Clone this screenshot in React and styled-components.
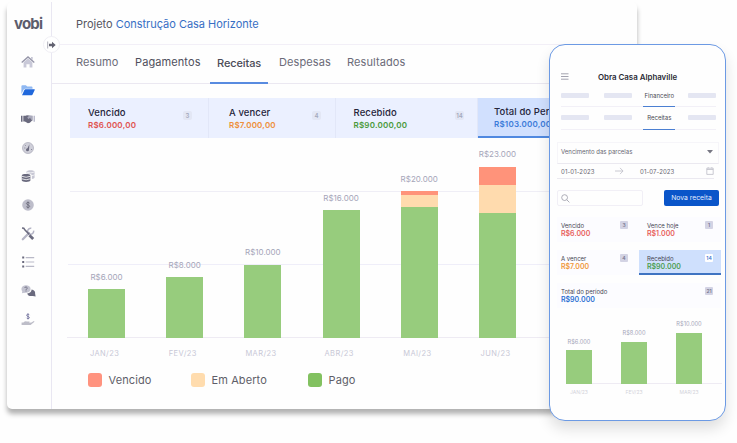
import React from "react";
import styled, { createGlobalStyle } from "styled-components";

const summary = [
  { label: "Vencido", value: "R$6.000,00", count: 3, color: "#e0524f", width: 139 },
  { label: "A vencer", value: "R$7.000,00", count: 4, color: "#ee8f3a", width: 127 },
  { label: "Recebido", value: "R$90.000,00", count: 14, color: "#4a9a3c", width: 142 },
  { label: "Total do Período", value: "R$103.000,00", color: "#3c7bd9", width: 140, active: true },
];

const tabs = [
  { name: "Resumo", width: 41, color: "#6b6b78" },
  { name: "Pagamentos", width: 64, color: "#4f4f5c" },
  { name: "Receitas", width: 44, active: true },
  { name: "Despesas", width: 50, color: "#6b6b78" },
  { name: "Resultados", width: 57, color: "#6b6b78" },
];

const months = [
  { month: "JAN/23", total: "R$6.000", paid: 49 },
  { month: "FEV/23", total: "R$8.000", paid: 61 },
  { month: "MAR/23", total: "R$10.000", paid: 73.5 },
  { month: "ABR/23", total: "R$16.000", paid: 128 },
  { month: "MAI/23", total: "R$20.000", paid: 131.5, open: 11.5, late: 3.7 },
  { month: "JUN/23", total: "R$23.000", paid: 124.7, open: 28, late: 18.8 },
];

const legend = [
  { name: "Vencido", color: "#ff937f", width: 103 },
  { name: "Em Aberto", color: "#ffdcae", width: 117 },
  { name: "Pago", color: "#82c160", width: 60 },
];

const mobileCards = [
  { label: "Vencido", value: "R$6.000", count: 3, color: "#e8605c" },
  { label: "Vence hoje", value: "R$1.000", count: 1, color: "#e8605c" },
  { label: "A vencer", value: "R$7.000", count: 4, color: "#f0983c" },
  { label: "Recebido", value: "R$90.000", count: 14, color: "#4c9e52", active: true },
  { label: "Total do período", value: "R$90.000", count: 21, color: "#2d70d2", wide: true },
];

const mobileMonths = [
  { month: "JAN/23", total: "R$6.000", paid: 34 },
  { month: "FEV/23", total: "R$8.000", paid: 42.5 },
  { month: "MAR/23", total: "R$10.000", paid: 51.5 },
];

const dark = "#6a6a7e";
const light = "#bcbccd";

const icons = [
  <>
    <path d="M2.6 7.2 7 3.4l4.4 3.8v5.4H8.6V9.2H5.4v3.4H2.6z" fill="#c9c9d8" />
    <path d="M.7 7.4 7 1.9l6.3 5.5" fill="none" stroke="#9595a8" strokeWidth="1.3" />
    <path d="M10 2h1.7v3L10 3.6z" fill="#c5c5d4" />
  </>,
  <>
    <path d="M.4 11V3.2q0-1 1-1h3.4l1.5 1.4h4.2q1 0 1 1v1.2H4.2q-1 0-1.5.8z" fill="#8fb8f2" />
    <path d="M1 12.2 3.4 7q.3-.7 1-.7h9q.6 0 .3.7l-2.1 4.5q-.3.7-1 .7z" fill="#2068dc" />
  </>,
  <>
    <path d="M0 3.8h1.5v6H0z" fill={dark} />
    <path d="M12.5 3.8H14v6h-1.5z" fill={light} />
    <path d="M2.3 3.8h2.2L6 3.3l2.4.3 2.9 4.6-2.4 2.6-2 .5-3-1.9H2.3z" fill={dark} />
    <path d="M6.3 5.5 8.6 3.2l3.2.6v5.3L9 6.1 7.3 7z" fill="#a9a9bb" />
  </>,
  <>
    <circle cx="7" cy="7" r="5.5" fill="#cfcfd9" stroke="#a9a9b8" strokeWidth=".7" />
    <path d="M8.4 3.3 8 8.8a1.5 1.5 0 1 1-1.5-1.5z" fill={dark} />
    <path d="M3.3 7h1M4.3 4.3l.7.7M10 8.5h1" stroke={dark} strokeWidth=".7" />
  </>,
  <>
    <path d="M5.5 2.7C5.5.7 13.6.7 13.6 2.7v5.8c0 .8-1.1 1.2-2.7 1.5V5.9c-1-.9-3-1.3-5.4-1.3z" fill="#c7c7d4" />
    <path d="M6 3.3q3.8 1.3 7.5-.3M11 6.6q1.5-.2 2.6-.8" fill="none" stroke="#fff" strokeWidth=".7" />
    <path d="M.8 6.5c0-1.9 8.6-1.9 8.6 0v5c0 1.9-8.6 1.9-8.6 0z" fill={dark} />
    <path d="M.8 7.3q4.3 1.9 8.6 0M.8 9.8q4.3 1.9 8.6 0" fill="none" stroke="#fff" strokeWidth=".8" />
  </>,
  <>
    <circle cx="7" cy="7" r="5.8" fill="#bdbdca" />
    <path d="M8.7 5.3C8.3 4.2 5.4 4.1 5.4 5.5s3.3 1.3 3.3 2.8-2.9 1.5-3.4.3M7 3.5v7" fill="none" stroke="#6c6c7c" strokeWidth=".9" />
  </>,
  <>
    <path d="M1.8 12.2 8 6" stroke="#b4b4c5" strokeWidth="2.3" strokeLinecap="round" />
    <path d="M12.6 3.6a3 3 0 1 1-2.3-2.3" fill="none" stroke="#b4b4c5" strokeWidth="1.5" />
    <path d="m1 1.1 1.8.2 1.2 1.8 4.3 4.3" fill="none" stroke={dark} strokeWidth="1.5" />
    <path d="m8.4 8.3 3.8 3.8" stroke={dark} strokeWidth="2.8" />
  </>,
  <>
    <path d="M1.2 1.6h2v2h-2zM1.2 6h2v2h-2zM1.2 10.4h2v2h-2z" fill={dark} />
    <path d="M4.7 2.6h8.5M4.7 7h8.5M4.7 11.4h8.5" stroke="#b9b9c7" strokeWidth="1.2" />
  </>,
  <>
    <path d="M10.6 5.5c2.4.4 3.9 2 3.5 4l.5 3-2.8-.6c-3 .7-5.2-.5-5.6-2.5 2.8-.2 4.3-1.7 4.4-3.9z" fill={dark} />
    <ellipse cx="5" cy="5" rx="4.6" ry="3.8" fill="#c3c3d0" />
    <path d="M.9 9.2 1.7 6l2.8 2.4z" fill="#c3c3d0" />
    <path d="M3.6 4c.2-1.5 3-1.2 2.6.3-.3.8-1.2.6-1.2 1.6M5 6.5v1" fill="none" stroke={dark} strokeWidth=".9" />
  </>,
  <>
    <path d="M8.4 2.1C7.9.9 5.6.9 5.6 2.3s2.8 1 2.8 2.3-2.4 1.4-2.9.2M7 .3v6.1" fill="none" stroke="#7777a0" strokeWidth=".9" />
    <path d="M.6 9.4h1.8q1.8-1.6 3.5-.9h2.4q.8.6-.1 1.2 2.1.1 4.2-1.5 1.4-.4.8.8L9.6 12H.6z" fill="#bdbdc8" />
  </>,
];

const BarChart = ({ data, small }) => (
  <>
    <Plot $small={small}>
      {data.map((item) => (
        <Column key={item.month} $small={small}>
          <BarValue $small={small}>{item.total}</BarValue>
          {item.late && <Bar $color="#ff937a" style={{ height: item.late }} />}
          {item.open && <Bar $color="#ffdbae" style={{ height: item.open }} />}
          <Bar $color="#97cc7d" style={{ height: item.paid }} />
        </Column>
      ))}
    </Plot>
    <Axis $small={small}>
      {data.map((item) => (
        <Month key={item.month} $small={small}>
          {item.month}
        </Month>
      ))}
    </Axis>
  </>
);

const Sidebar = () => (
  <StyledSidebar>
    <Logo>vobi</Logo>
    <IconList>
      {icons.map((icon, i) => (
        <svg key={i} width="14" height="14" viewBox="0 0 14 14">
          {icon}
        </svg>
      ))}
    </IconList>
    <Toggle>
      <svg width="9" height="8" viewBox="0 0 9 8">
        <path d="M.7.5v7" stroke="#9b9ba8" strokeWidth=".8" />
        <path d="M2 2.8h3V.8L8.7 4 5 7.2v-2H2z" fill="#626271" />
      </svg>
    </Toggle>
  </StyledSidebar>
);

const Desktop = () => (
  <Window>
    <Sidebar />
    <Content>
      <Header>
        Projeto <span>Construção Casa Horizonte</span>
      </Header>
      <Tabs>
        {tabs.map((tab) => (
          <Tab key={tab.name} $width={tab.width} $color={tab.color} $active={tab.active}>
            {tab.name}
          </Tab>
        ))}
      </Tabs>
      <Summary>
        {summary.map((item) => (
          <SummaryItem key={item.label} $width={item.width} $active={item.active}>
            <div>
              <h4>{item.label}</h4>
              <Amount $color={item.color}>{item.value}</Amount>
            </div>
            {item.count && <Count>{item.count}</Count>}
          </SummaryItem>
        ))}
      </Summary>
      <BarChart data={months} />
      <Legend>
        {legend.map((item) => (
          <LegendItem key={item.name} $color={item.color} $width={item.width}>
            {item.name}
          </LegendItem>
        ))}
      </Legend>
    </Content>
  </Window>
);

const Mobile = () => (
  <Phone>
    <PhoneHeader>
      <svg width="8" height="7" viewBox="0 0 8 7">
        <path d="M0 .8h7.5M0 3.5h7.5M0 6.2h7.5" stroke="#8b8b9a" strokeWidth=".8" />
      </svg>
      <h3>Obra Casa Alphaville</h3>
    </PhoneHeader>
    <PhoneTabs>
      <Skeleton />
      <Skeleton />
      <PhoneTab>Financeiro</PhoneTab>
      <Skeleton />
    </PhoneTabs>
    <PhoneTabs>
      <Skeleton />
      <Skeleton />
      <PhoneTab>Receitas</PhoneTab>
      <Skeleton />
    </PhoneTabs>
    <Select>
      Vencimento das parcelas
      <svg width="6" height="4" viewBox="0 0 6 4">
        <path d="M0 0h6L3 3.6z" fill="#777783" />
      </svg>
    </Select>
    <DateRange>
      <span>01-01-2023</span>
      <svg width="9" height="8" viewBox="0 0 9 8">
        <path d="M0 4h8M5 .9 8.1 4 5 7.1" fill="none" stroke="#bcbcc6" strokeWidth=".8" />
      </svg>
      <span>01-07-2023</span>
      <svg width="8" height="8" viewBox="0 0 8 8">
        <path d="M.8 1.2h6.4v6.2H.8zM.8 2.5h6.4M2.2.2v1M5.8.2v1" fill="none" stroke="#bcbcc6" strokeWidth=".8" />
      </svg>
    </DateRange>
    <Actions>
      <Search>
        <svg width="9" height="9" viewBox="0 0 9 9">
          <circle cx="3.6" cy="3.6" r="2.9" fill="none" stroke="#9999a6" strokeWidth=".8" />
          <path d="m5.8 5.8 2.6 2.6" stroke="#9999a6" strokeWidth=".8" />
        </svg>
      </Search>
      <NewButton>Nova receita</NewButton>
    </Actions>
    <Cards>
      {mobileCards.map((card) => (
        <Card key={card.label} $active={card.active} $wide={card.wide}>
          <div>
            <h5>{card.label}</h5>
            <CardValue $color={card.color}>{card.value}</CardValue>
          </div>
          <CardCount $active={card.active}>{card.count}</CardCount>
        </Card>
      ))}
    </Cards>
    <BarChart data={mobileMonths} small />
  </Phone>
);

const App = () => (
  <Page>
    <GlobalStyle />
    <Desktop />
    <Mobile />
  </Page>
);

const GlobalStyle = createGlobalStyle`
  * {
    box-sizing: border-box;
  }
  body {
    margin: 0;
    overflow: hidden;
    background: #fefefe;
    font-family: Inter, "Liberation Sans", sans-serif;
  }
  h3, h4, h5, p {
    margin: 0;
  }
  svg {
    display: block;
    overflow: visible;
    flex-shrink: 0;
  }
`;

const Page = styled.div`
  position: relative;
  width: 737px;
  height: 443px;
  padding: 2px 0 0 7px;
`;

const Window = styled.div`
  display: flex;
  width: 630px;
  height: 407px;
  border-radius: 5px;
  background: #fefefe;
  box-shadow: 0 5px 5px rgba(0, 0, 0, 0.3);
`;

const StyledSidebar = styled.div`
  position: relative;
  width: 45px;
  border-right: 1px solid #e9e7f2;
`;

const Logo = styled.div`
  height: 40px;
  padding-left: 7px;
  font-size: 15px;
  line-height: 43px;
  font-weight: 700;
  letter-spacing: -0.8px;
  color: #5d5d6c;
`;

const IconList = styled.div`
  display: flex;
  flex-direction: column;
  align-items: center;
  gap: 14.7px;
  padding: 12.5px 2px 0 0;
`;

const Toggle = styled.div`
  position: absolute;
  top: 34px;
  right: -9px;
  display: flex;
  align-items: center;
  justify-content: center;
  width: 17px;
  height: 17px;
  border-radius: 50%;
  border: 1px solid #f0eff5;
  background: #fff;
`;

const Content = styled.div`
  flex: 1;
  min-width: 0;
`;

const Header = styled.div`
  height: 43px;
  padding-left: 24px;
  border-bottom: 1px solid #f2eff7;
  font-size: 11px;
  line-height: 44px;
  letter-spacing: -0.02px;
  color: #55555f;
  span {
    color: #376fc4;
  }
`;

const Tabs = styled.div`
  display: flex;
  gap: 18px;
  height: 39px;
  padding-left: 24px;
  border-bottom: 1px solid #ebe8f1;
`;

const Tab = styled.div`
  width: ${(props) => props.$width}px;
  height: 39px;
  font-size: 11px;
  line-height: 35px;
  letter-spacing: 0.1px;
  white-space: nowrap;
  color: ${(props) => props.$color || "#4b4b57"};
  ${(props) =>
    props.$active &&
    `
    box-sizing: content-box;
    height: 37px;
    margin: 0 -7px;
    padding: 0 7px;
    font-weight: 500;
    line-height: 36px;
    letter-spacing: -0.1px;
    border-bottom: 2px solid #588be0;
  `}
`;

const Summary = styled.div`
  display: flex;
  width: 548px;
  height: 40px;
  margin: 14px 0 0 18px;
  background: #ebf0ff;
`;

const SummaryItem = styled.div`
  display: flex;
  justify-content: space-between;
  width: ${(props) => props.$width}px;
  padding: 9px 16px 0 18px;
  border-right: 1px solid #e2e7f8;
  h4 {
    font-size: 9.5px;
    line-height: 12px;
    font-weight: 500;
    letter-spacing: 0.1px;
    white-space: nowrap;
    color: #25253a;
  }
  &:nth-child(2) {
    padding: 9px 14px 0 20px;
  }
  &:nth-child(3) {
    padding: 9px 13px 0 17.5px;
  }
  ${(props) =>
    props.$active &&
    `
    padding: 8px 15px 0 16px;
    background: #d1e0fe;
    border-right: 0;
    border-bottom: 2px solid #5089e0;
  `}
`;

const Amount = styled.p`
  font-size: 8px;
  line-height: 12px;
  font-weight: 600;
  letter-spacing: 0.2px;
  color: ${(props) => props.$color};
`;

const Count = styled.span`
  width: 9px;
  height: 9px;
  margin-top: 4px;
  border-radius: 2px;
  background: #e3e7f5;
  font-size: 6px;
  line-height: 9px;
  font-weight: 600;
  text-align: center;
  color: #a4a9bd;
`;

const Plot = styled.div`
  display: flex;
  align-items: flex-end;
  gap: ${(props) => (props.$small ? "29px" : "0")};
  width: ${(props) => (props.$small ? "156px" : "550px")};
  height: ${(props) => (props.$small ? "76px" : "200px")};
  margin-left: ${(props) => (props.$small ? "9px" : "15.4px")};
  border-bottom: 1px solid #eeebf3;
  background: ${(props) =>
    props.$small
      ? "none"
      : "linear-gradient(#efeef6, #efeef6) 3px 53px / 100% 1px no-repeat, linear-gradient(#efeef9, #efeef9) 1px 126px / 100% 1px no-repeat"};
`;

const Column = styled.div`
  display: flex;
  flex-direction: column;
  align-items: center;
  width: ${(props) => (props.$small ? 26 : 78.2)}px;
  margin-bottom: -1px;
  & > i {
    width: ${(props) => (props.$small ? 26 : 37)}px;
  }
`;

const Bar = styled.i`
  display: block;
  background: ${(props) => props.$color};
`;

const BarValue = styled.span`
  margin-bottom: ${(props) => (props.$small ? 4.5 : 6.5)}px;
  font-size: ${(props) => (props.$small ? 5.7 : 8)}px;
  line-height: ${(props) => (props.$small ? 8 : 12)}px;
  color: #a5a5b9;
`;

const Axis = styled.div`
  display: flex;
  gap: ${(props) => (props.$small ? "29px" : "0")};
  margin-left: ${(props) => (props.$small ? "9px" : "13.5px")};
  padding-top: ${(props) => (props.$small ? 4 : 9.5)}px;
`;

const Month = styled.span`
  width: ${(props) => (props.$small ? 26 : 78.2)}px;
  font-size: ${(props) => (props.$small ? 5 : 7.5)}px;
  line-height: ${(props) => (props.$small ? 8 : 12)}px;
  letter-spacing: ${(props) => (props.$small ? 0 : 0.4)}px;
  text-align: center;
  color: ${(props) => (props.$small ? "#d3d3da" : "#c8c8d6")};
`;

const Legend = styled.div`
  display: flex;
  padding: 13px 0 0 36px;
`;

const LegendItem = styled.div`
  display: flex;
  align-items: center;
  gap: 6.5px;
  width: ${(props) => props.$width}px;
  font-size: 11px;
  line-height: 14px;
  letter-spacing: 0.1px;
  color: #5e5e69;
  &::before {
    content: "";
    width: 14px;
    height: 14px;
    border-radius: 3px;
    background: ${(props) => props.$color};
  }
`;

const Phone = styled.div`
  position: absolute;
  top: 44px;
  left: 549px;
  width: 177px;
  height: 377px;
  padding: 0 4px 0 7px;
  border: 1px solid #6c9ae4;
  border-radius: 16px;
  background: #fefefe;
  box-shadow: 0 8px 14px rgba(0, 0, 0, 0.12);
`;

const PhoneHeader = styled.div`
  display: flex;
  align-items: center;
  height: 40px;
  padding: 23px 0 0 4px;
  h3 {
    flex: 1;
    padding-right: 15px;
    text-align: center;
    font-size: 7.9px;
    line-height: 14px;
    font-weight: 600;
    color: #2b2b36;
  }
`;

const PhoneTabs = styled.div`
  display: grid;
  grid-template-columns: 28px 28px 30px 28px;
  justify-content: space-between;
  align-items: center;
  height: 22px;
  margin: 0 5px 0 4px;
  border-bottom: 1px solid #f2f0f7;
  & + & {
    height: 23px;
  }
`;

const Skeleton = styled.span`
  height: 5px;
  margin-bottom: 1px;
  border-radius: 1px;
  background: #e4e6f2;
  &:nth-child(2) {
    margin-left: 1px;
    margin-right: -1px;
  }
`;

const PhoneTab = styled.span`
  align-self: stretch;
  margin: 0 -1px -1px;
  font-size: 6px;
  line-height: 21px;
  text-align: center;
  white-space: nowrap;
  color: #484852;
  border-bottom: 1px solid #4b7fd2;
`;

const Select = styled.div`
  display: flex;
  align-items: center;
  justify-content: space-between;
  height: 22px;
  margin: 12px 2px 0 0;
  padding: 0 5px 3px 3px;
  border: 1px solid #f6f5f9;
  border-bottom-color: #ebe9f0;
  font-size: 6px;
  color: #676771;
`;

const DateRange = styled.div`
  display: grid;
  grid-template-columns: 54px 25px 66px 8px;
  align-items: center;
  height: 15px;
  margin-right: 7px;
  padding-left: 4px;
  border-bottom: 1px solid #ebe9f0;
  font-size: 6px;
  letter-spacing: 0.1px;
  color: #676771;
`;

const Actions = styled.div`
  display: flex;
  justify-content: space-between;
  margin: 11px 2px 0 0;
`;

const Search = styled.div`
  width: 86px;
  height: 16px;
  padding: 3px;
  border: 1px solid #f1eff6;
  border-radius: 2px;
`;

const NewButton = styled.button`
  width: 55px;
  height: 16px;
  padding: 0;
  border: 0;
  border-radius: 2px;
  background: #0a55c9;
  font-family: inherit;
  font-size: 6.8px;
  line-height: 16px;
  color: #e3edff;
`;

const Cards = styled.div`
  display: grid;
  grid-template-columns: 82px 82px;
  grid-auto-rows: 25px;
  gap: 8px 0;
  margin-top: 11px;
`;

const Card = styled.div`
  display: flex;
  justify-content: space-between;
  grid-column: ${(props) => (props.$wide ? "span 2" : "auto")};
  padding: 4px 11px 0 4px;
  background: ${(props) => (props.$active ? "#cfe0fd" : "#fcfcff")};
  border-bottom: ${(props) => (props.$active ? "2px solid #3f74c2" : "0")};
  &:nth-child(even) {
    padding: 4px 8px 0 8px;
  }
  &:nth-child(5) {
    padding-right: 8px;
  }
  h5 {
    padding-top: 1px;
    font-size: 6px;
    line-height: 7px;
    font-weight: 400;
    color: #454552;
  }
`;

const CardValue = styled.p`
  font-size: 7px;
  line-height: 9px;
  font-weight: 600;
  color: ${(props) => props.$color};
`;

const CardCount = styled.span`
  width: 8px;
  height: 8px;
  border-radius: 1px;
  background: ${(props) => (props.$active ? "#fff" : "#d3d3e4")};
  font-size: 5px;
  line-height: 8px;
  font-weight: 600;
  text-align: center;
  color: ${(props) => (props.$active ? "#4077d0" : "#77778f")};
`;

export default App;
